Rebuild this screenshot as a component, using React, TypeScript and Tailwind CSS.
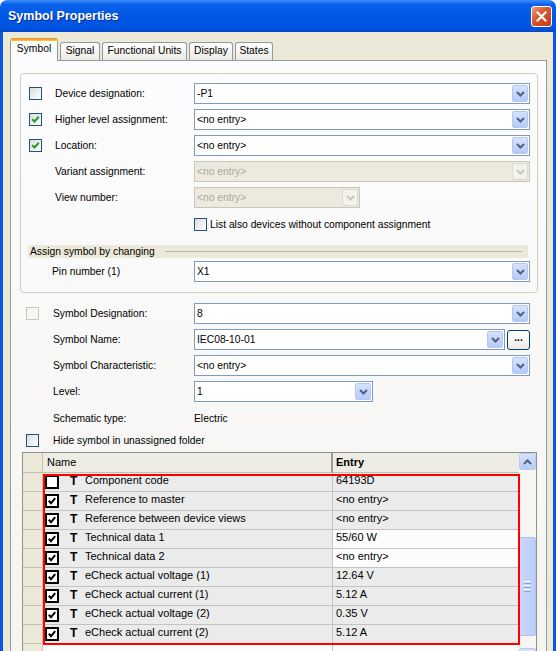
import React from 'react';

type Row = { name: string; value: string; checked: boolean; white?: boolean };

const rows: Row[] = [
  { name: 'Component code', value: '64193D', checked: false },
  { name: 'Reference to master', value: '<no entry>', checked: true },
  { name: 'Reference between device views', value: '<no entry>', checked: true },
  { name: 'Technical data 1', value: '55/60 W', checked: true, white: true },
  { name: 'Technical data 2', value: '<no entry>', checked: true, white: true },
  { name: 'eCheck actual voltage (1)', value: '12.64 V', checked: true },
  { name: 'eCheck actual current (1)', value: '5.12 A', checked: true },
  { name: 'eCheck actual voltage (2)', value: '0.35 V', checked: true },
  { name: 'eCheck actual current (2)', value: '5.12 A', checked: true },
];

const Chevron = ({ color = '#4D6185', up = false }: { color?: string; up?: boolean }) => (
  <svg width="9" height="6" viewBox="0 0 9 6">
    <path d={up ? 'M1 5 L4.5 1.5 L8 5' : 'M1 1 L4.5 4.5 L8 1'} fill="none" stroke={color} strokeWidth="2" />
  </svg>
);

// XP style checkbox used in the dialog
const XpCheck = ({ checked = false, disabled = false }: { checked?: boolean; disabled?: boolean }) => (
  <div
    className={`w-[13px] h-[13px] shrink-0 border flex items-center justify-center ${
      disabled
        ? 'border-[#CAC8BB] bg-[#F7F6F1]'
        : 'border-[#1C5180] bg-[linear-gradient(135deg,#DCDCD7,#FFFFFF)]'
    }`}
  >
    {checked && (
      <svg width="9" height="9" viewBox="0 0 9 9">
        <path d="M1.2 4.2 L3.5 6.5 L7.8 1.8" fill="none" stroke="#21A121" strokeWidth="2" />
      </svg>
    )}
  </div>
);

const DropBtn = ({ disabled = false }: { disabled?: boolean }) => (
  <div
    className={`w-[16px] h-full shrink-0 rounded-[2px] border flex items-center justify-center ${
      disabled
        ? 'border-[#DCDACE] bg-[#F3F2EC]'
        : 'border-[#B4C6F2] bg-[linear-gradient(to_bottom,#D6E2FD,#B6CAF6)]'
    }`}
  >
    <Chevron color={disabled ? '#C9C7BA' : '#4D6185'} />
  </div>
);

const Combo = ({ value, w = 'flex-1', disabled = false }: { value: string; w?: string; disabled?: boolean }) => (
  <div
    className={`${w} h-[21px] border p-[1px] flex items-center ${
      disabled ? 'border-[#C9C7BA] bg-[#ECEADF] text-[#ACA899]' : 'border-[#7F9DB9] bg-white text-black'
    }`}
  >
    <span className="flex-1 pl-[1px] pt-[2px] whitespace-nowrap">{value}</span>
    <DropBtn disabled={disabled} />
  </div>
);

const TableCheck = ({ checked }: { checked: boolean }) => (
  <div className="w-[14px] h-[14px] shrink-0 border-2 border-black bg-white flex items-center justify-center">
    {checked && (
      <svg width="8" height="8" viewBox="0 0 8 8">
        <path d="M0.8 3.8 L3 6.2 L7.2 1.2" fill="none" stroke="#000" strokeWidth="2" />
      </svg>
    )}
  </div>
);

const TitleBar = () => (
  <div className="h-[32px] shrink-0 rounded-t-[7px] flex items-center bg-[linear-gradient(to_bottom,#3C8EF8_0%,#0A61EC_14%,#0058E6_50%,#0054E2_85%,#034AC9_100%)]">
    <span className="ml-[8px] text-white font-bold text-[12.5px] [text-shadow:1px_1px_#0A2A8C]">Symbol Properties</span>
    <div className="ml-auto mr-[4px] w-[21px] h-[21px] rounded-[3px] border border-white bg-[linear-gradient(135deg,#EE9A7C,#D9532C_45%,#C23C16)] flex items-center justify-center">
      <svg width="11" height="11" viewBox="0 0 11 11">
        <path d="M1.5 1.5 L9.5 9.5 M9.5 1.5 L1.5 9.5" stroke="#fff" strokeWidth="2.2" strokeLinecap="square" />
      </svg>
    </div>
  </div>
);

const Tabs = () => {
  const others = [
    { label: 'Signal', w: 'w-[40px]' },
    { label: 'Functional Units', w: 'w-[85px]' },
    { label: 'Display', w: 'w-[44px]' },
    { label: 'States', w: 'w-[38px]' },
  ];
  return (
    <div className="flex items-end h-[28px] gap-[2px]">
      <div className="relative z-10 -mb-px w-[48px] h-[23px] flex flex-col">
        <div className="h-[3px] rounded-t-[3px] bg-[linear-gradient(to_bottom,#E68B2C,#FFC73C)]" />
        <div className="flex-1 border-x border-[#919B9C] bg-[#FCFCFE] flex items-center justify-center pb-[3px]">
          Symbol
        </div>
      </div>
      {others.map((t) => (
        <div
          key={t.label}
          className={`${t.w} h-[18px] rounded-t-[3px] border border-b-0 border-[#919B9C] bg-[linear-gradient(to_bottom,#FFFFFF,#ECEBE6)] flex items-center justify-center`}
        >
          {t.label}
        </div>
      ))}
    </div>
  );
};

const Scrollbar = () => (
  <div className="w-[17px] shrink-0 flex flex-col bg-[#F7F6F2]">
    <div className="h-[17px] rounded-[2px] border border-[#B8CBF4] bg-[linear-gradient(to_bottom,#D6E2FD,#B9CCF6)] flex items-center justify-center">
      <Chevron up />
    </div>
    <div className="h-[67px]" />
    <div className="h-[99px] rounded-[2px] border border-[#AFC4F2] bg-[linear-gradient(to_right,#C9D8FC,#BCCEF8)] flex flex-col items-center justify-center gap-[1px]">
      <div className="w-[7px] h-[1px] bg-white" />
      <div className="w-[7px] h-[1px] bg-[#8CA6E6]" />
      <div className="w-[7px] h-[1px] bg-white" />
      <div className="w-[7px] h-[1px] bg-[#8CA6E6]" />
      <div className="w-[7px] h-[1px] bg-white" />
      <div className="w-[7px] h-[1px] bg-[#8CA6E6]" />
    </div>
    <div className="h-[12px]" />
    <div className="h-[17px] rounded-[2px] border border-[#B8CBF4] bg-[linear-gradient(to_bottom,#D6E2FD,#B9CCF6)] flex items-center justify-center">
      <Chevron />
    </div>
  </div>
);

const PropTable = () => (
  <div className="mt-[5px] ml-[11px] mr-[9px] border border-[#8E8F8F] flex bg-white text-[11px]">
    <div className="flex-1 relative">
      <div className="flex h-[20px]">
        <div className="w-[20px] bg-[#ECE9D8] border-r border-b border-[#C5C1AC]" />
        <div className="w-[290px] bg-[#EEEDE5] border-r-2 border-b border-r-[#9C9B93] border-b-[#C5C1AC] flex items-center pl-[4px]">
          Name
        </div>
        <div className="flex-1 bg-[#EEEDE5] border-b border-[#C5C1AC] flex items-center pl-[3px] font-bold">Entry</div>
      </div>
      {rows.map((r) => (
        <div key={r.name} className="flex h-[19px]">
          <div className="w-[20px] bg-[#ECE9D8] border-r border-b border-[#C5C1AC]" />
          <div className="w-[290px] bg-[#EBEBEB] border-r border-b border-[#C3C3C3] flex items-center pl-[2px]">
            <TableCheck checked={r.checked} />
            <span className="ml-[11px] w-[8px] font-bold text-[12px] mb-[2px]">T</span>
            <span className="ml-[7px] mb-[4px] whitespace-nowrap">{r.name}</span>
          </div>
          <div
            className={`flex-1 border-b border-[#C3C3C3] flex items-center pl-[3px] whitespace-nowrap ${
              r.white ? 'bg-[#FCFCFC]' : 'bg-[#EBEBEB]'
            }`}
          >
            <span className="mb-[4px]">{r.value}</span>
          </div>
        </div>
      ))}
      <div className="flex h-[19px]">
        <div className="w-[20px] bg-[#ECE9D8] border-r border-[#C5C1AC]" />
        <div className="w-[290px] bg-[#FCFCFC] border-r border-[#C3C3C3]" />
        <div className="flex-1 bg-[#FCFCFC]" />
      </div>
      {/* red annotation frame */}
      <div className="absolute left-[20px] top-[21px] w-[477px] h-[171px] border-2 border-[#FF0000] pointer-events-none" />
    </div>
    <Scrollbar />
  </div>
);

export default function App() {
  return (
    <div className="w-[556px] h-[651px] overflow-hidden flex flex-col bg-white font-['Liberation_Sans',Arial,sans-serif] text-[10.3px] leading-none text-black">
      <TitleBar />
      <div className="flex-1 bg-[#ECE9D8] border-x-[3px] border-[#0B56DD] pl-[7px] pr-[6px]">
        <Tabs />
        <div className="border border-[#919B9C] bg-[linear-gradient(to_bottom,#FCFCFE,#F4F3EE)] pt-[12px] pb-[40px]">
          {/* device group */}
          <div className="ml-[9px] mr-[8px] border border-[#D0D0BF] rounded-[4px] pt-[9px] pb-[10px] pr-[7px] flex flex-col">
            <div className="flex items-center h-[21px]">
              <div className="w-[173px] shrink-0 flex items-center pl-[8px]">
                <XpCheck />
                <span className="ml-[13px] pt-[2px]">Device designation:</span>
              </div>
              <Combo value="-P1" />
            </div>
            <div className="mt-[5px] flex items-center h-[21px]">
              <div className="w-[173px] shrink-0 flex items-center pl-[8px]">
                <XpCheck checked />
                <span className="ml-[13px] pt-[2px]">Higher level assignment:</span>
              </div>
              <Combo value="<no entry>" />
            </div>
            <div className="mt-[5px] flex items-center h-[21px]">
              <div className="w-[173px] shrink-0 flex items-center pl-[8px]">
                <XpCheck checked />
                <span className="ml-[13px] pt-[2px]">Location:</span>
              </div>
              <Combo value="<no entry>" />
            </div>
            <div className="mt-[5px] flex items-center h-[21px]">
              <div className="w-[173px] shrink-0 pl-[34px] pt-[2px]">Variant assignment:</div>
              <Combo value="<no entry>" disabled />
            </div>
            <div className="mt-[5px] flex items-center h-[21px]">
              <div className="w-[173px] shrink-0 pl-[34px] pt-[2px]">View number:</div>
              <Combo value="<no entry>" w="w-[166px]" disabled />
            </div>
            <div className="mt-[10px] flex items-center h-[13px] pl-[173px]">
              <XpCheck />
              <span className="ml-[3px] pt-[2px]">List also devices without component assignment</span>
            </div>
            <div className="mt-[14px] ml-[7px] mr-[2px] h-[13px] bg-[#ECE9D8] flex items-center pl-[2px] pr-[6px]">
              <span className="pt-[2px]">Assign symbol by changing</span>
              <div className="flex-1 ml-[10px] border-t border-[#B5B3A6]" />
            </div>
            <div className="mt-[3px] flex items-center h-[21px]">
              <div className="w-[173px] shrink-0 pl-[31px] pt-[2px]">Pin number (1)</div>
              <Combo value="X1" />
            </div>
          </div>

          {/* symbol section */}
          <div className="mt-[10px] pl-[15px] pr-[16px] flex flex-col">
            <div className="flex items-center h-[21px]">
              <div className="w-[168px] shrink-0 flex items-center">
                <XpCheck disabled />
                <span className="ml-[14px] pt-[2px]">Symbol Designation:</span>
              </div>
              <Combo value="8" />
            </div>
            <div className="mt-[5px] flex items-center h-[21px]">
              <div className="w-[168px] shrink-0 pl-[27px] pt-[2px]">Symbol Name:</div>
              <Combo value="IEC08-10-01" />
              <div className="ml-[2px] w-[23px] h-[20px] rounded-[3px] border border-[#003C74] bg-[linear-gradient(to_bottom,#FFFFFF,#ECEBE6)] flex items-end justify-center pb-[5px] font-bold">
                ...
              </div>
            </div>
            <div className="mt-[5px] flex items-center h-[21px]">
              <div className="w-[168px] shrink-0 pl-[27px] pt-[2px]">Symbol Characteristic:</div>
              <Combo value="<no entry>" />
            </div>
            <div className="mt-[5px] flex items-center h-[21px]">
              <div className="w-[168px] shrink-0 pl-[27px] pt-[2px]">Level:</div>
              <Combo value="1" w="w-[179px]" />
            </div>
            <div className="mt-[8px] flex items-center h-[16px]">
              <div className="w-[168px] shrink-0 pl-[27px] pt-[2px]">Schematic type:</div>
              <span className="pt-[2px]">Electric</span>
            </div>
            <div className="mt-[8px] flex items-center h-[13px]">
              <XpCheck />
              <span className="ml-[14px] pt-[2px]">Hide symbol in unassigned folder</span>
            </div>
          </div>

          <PropTable />
        </div>
      </div>
    </div>
  );
}
